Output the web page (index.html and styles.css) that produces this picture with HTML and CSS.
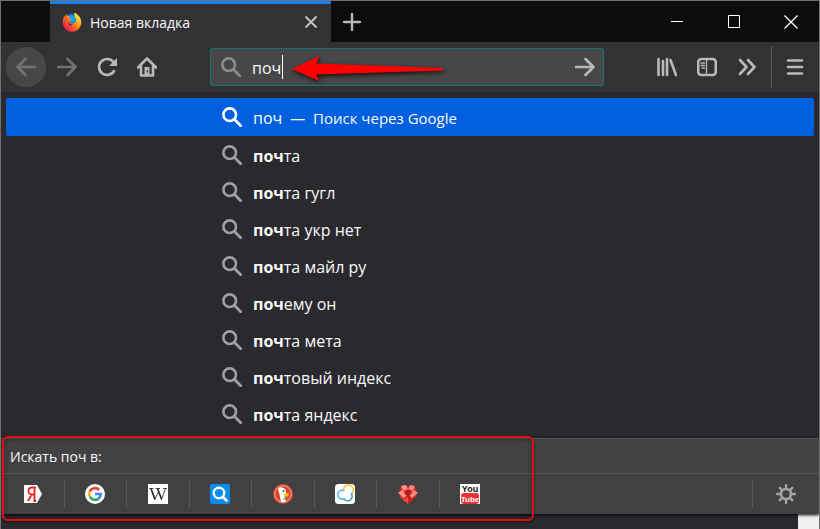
FILE: index.html
```html
<!DOCTYPE html>
<html lang="ru">
<head>
<meta charset="utf-8">
<title>Новая вкладка</title>
<link rel="stylesheet" href="styles.css">
</head>
<body>
<svg class="defs" aria-hidden="true">
  <symbol id="search" viewBox="0 0 20 20"><circle cx="7.7" cy="7.7" r="6.3" fill="none" stroke="currentColor" stroke-width="2.6"/><path d="M12.3 12.3 18.7 18.7" stroke="currentColor" stroke-width="2.8" stroke-linecap="round"/></symbol>
</svg>
<div class="window">
  <header class="tabbar">
    <div class="tab">
      <svg class="tab-icon" viewBox="0 0 20 20">
        <defs>
          <linearGradient id="fox" x1="0.9" y1="0.1" x2="0.15" y2="0.85"><stop offset="0" stop-color="#fff14a"/><stop offset=".35" stop-color="#ffb01f"/><stop offset=".65" stop-color="#ff5a22"/><stop offset="1" stop-color="#f0204e"/></linearGradient>
        </defs>
        <circle cx="10" cy="8.5" r="7" fill="#1769d2"/>
        <path d="M6 4Q10 2 13 5L13 10 6 10Z" fill="#18a4f0"/>
        <path d="M12.5.5Q19.3 4 19.2 11A9.2 8.8 0 0 1 .8 11Q.5 6 2.6 3.2L3.4 5.2 4.2 2.2 6 4.6Q7.2 4.2 8.2 4.8L7.4 6.8 9.6 7.5 7.6 9Q7.4 11 9.8 11.2 12.5 11.4 13.6 9.5 14.8 7.5 13 5.4 11.6 3 12.5.5Z" fill="url(#fox)"/>
        <path d="M6 9.5Q7.5 13 11 12.7L9 14Q6 13 6 9.5Z" fill="#2b2a88"/>
      </svg>
      <span class="tab-title">Новая вкладка</span>
      <button class="bare" aria-label="Закрыть вкладку"><svg width="12" height="12" viewBox="0 0 12 12"><path d="M1 1 11 11M11 1 1 11" stroke="#c4c4c5" stroke-width="1.8" stroke-linecap="round"/></svg></button>
    </div>
    <button class="bare new-tab" aria-label="Открыть новую вкладку"><svg width="18" height="18" viewBox="0 0 18 18"><path d="M9 1V17M1 9H17" stroke="#b9b9ba" stroke-width="2.4" stroke-linecap="round"/></svg></button>
    <div class="win-controls">
      <button class="bare" aria-label="Свернуть"><svg width="12" height="14" viewBox="0 0 12 14"><path d="M0 6.5H12" stroke="#fff"/></svg></button>
      <button class="bare" aria-label="Развернуть"><svg width="12" height="13" viewBox="0 0 12 13"><path d="M.5.5H11.500V12.500H.5Z" fill="none" stroke="#fff"/></svg></button>
      <button class="bare" aria-label="Закрыть"><svg width="14" height="14" viewBox="0 0 14 14"><path d="M.5.5 13.500 13.500M13.500.5.5 13.500" stroke="#fff" stroke-width="1.3"/></svg></button>
    </div>
  </header>

  <nav class="toolbar">
    <button class="tool back" aria-label="Назад"><svg width="20" height="20" viewBox="0 0 20 20"><path d="M19 10H2M9.500 2 1.500 10 9.500 18"/></svg></button>
    <button class="tool forward" aria-label="Вперёд"><svg width="20" height="20" viewBox="0 0 20 20"><path d="M1 10H18M10.500 2 18.500 10 10.500 18"/></svg></button>
    <button class="tool" aria-label="Обновить"><svg width="20" height="20" viewBox="0 0 20 20"><path d="M17 14A8 8 0 1 1 16.500 5.200"/><path class="solid" d="M20 1V9H12Z"/></svg></button>
    <button class="tool" aria-label="Домой"><svg width="20" height="20" viewBox="0 0 20 20"><path d="M1 10.500 10 1.500 19 10.500M4 9.500V18.500H16V9.500"/><path class="solid" d="M7.500 10H12.500V18H7.500Z"/><path class="knob" d="M10.500 13.500V15"/></svg></button>
    <form class="urlbar">
      <svg class="icon"><use href="#search"/></svg>
      <div class="field">
        <input type="text" value="поч" aria-label="Поиск или адрес">
        <span class="caret"></span>
      </div>
      <button type="button" class="bare" aria-label="Перейти"><svg class="go" width="20" height="20" viewBox="0 0 20 20"><path d="M1 10H18M10.500 2 18.500 10 10.500 18"/></svg></button>
      <svg class="arrow" viewBox="0 0 154 26" aria-hidden="true"><path d="M0 13 27 0 24.500 7.500 150 12Q154 13 150 14.500L24.500 18.500 27 25Z" fill="#f00"/></svg>
    </form>
    <button class="tool" aria-label="Библиотека"><svg width="20" height="20" viewBox="0 0 20 20"><path d="M1.500 2V18M6 4V18M10 2V18M13.500 3 19 18"/></svg></button>
    <button class="tool" aria-label="Боковая панель"><svg width="20" height="20" viewBox="0 0 20 20"><rect x="1.200" y="2" width="17.600" height="16" rx="3"/><path class="fine" d="M9.500 2V18M4 6H7.500M4 8.500H7.500M5 11H7.500"/></svg></button>
    <button class="tool" aria-label="Другие инструменты"><svg width="20" height="20" viewBox="0 0 20 20"><path d="M3 3 9.500 10 3 17M11 3 17.500 10 11 17"/></svg></button>
    <span class="divider"></span>
    <button class="tool" aria-label="Меню"><svg width="20" height="20" viewBox="0 0 20 20"><path d="M3 3.500H17M3 10H17M3 16.500H17"/></svg></button>
  </nav>

  <main class="popup">
    <ul class="results">
      <li class="selected"><svg class="icon"><use href="#search"/></svg><span>поч</span><span class="action">—&nbsp; Поиск через Google</span></li>
      <li><svg class="icon"><use href="#search"/></svg><span><b>поч</b>та</span></li>
      <li><svg class="icon"><use href="#search"/></svg><span><b>поч</b>та гугл</span></li>
      <li><svg class="icon"><use href="#search"/></svg><span><b>поч</b>та укр нет</span></li>
      <li><svg class="icon"><use href="#search"/></svg><span><b>поч</b>та майл ру</span></li>
      <li><svg class="icon"><use href="#search"/></svg><span><b>поч</b>ему он</span></li>
      <li><svg class="icon"><use href="#search"/></svg><span><b>поч</b>та мета</span></li>
      <li><svg class="icon"><use href="#search"/></svg><span><b>поч</b>товый индекс</span></li>
      <li><svg class="icon"><use href="#search"/></svg><span><b>поч</b>та яндекс</span></li>
    </ul>
    <section class="oneoffs">
      <div class="oneoffs-title">Искать поч в:</div>
      <div class="oneoffs-row">
        <div class="engines">
          <button class="bare" aria-label="Яндекс"><svg width="20" height="20" viewBox="0 0 20 20"><path d="M1 1H14L19 10 14 19H1Z" fill="#fff"/><path d="M11.500 17V3.500H9Q5.500 3.500 5.500 7T9 10.500H11.500M8.700 10.500 5 17M10 3.500H13M10.500 17H13" fill="none" stroke="#e52620" stroke-width="1.800"/></svg></button>
          <button class="bare" aria-label="Google"><svg width="20" height="20" viewBox="0 0 20 20"><circle cx="10" cy="10" r="10" fill="#fff"/><g fill="none" stroke-width="2.600"><path d="M14.200 6A5.800 5.800 0 0 0 4.800 7.300" stroke="#ea4335"/><path d="M4.800 7.300A5.800 5.800 0 0 0 4.800 12.700" stroke="#fbbc05"/><path d="M4.800 12.700A5.800 5.800 0 0 0 13.500 14.600" stroke="#34a853"/><path d="M10 10H15.800A5.800 5.800 0 0 1 13.500 14.600" stroke="#4285f4"/></g></svg></button>
          <button class="bare" aria-label="Википедия"><svg width="20" height="20" viewBox="0 0 20 20"><path d="M0 0H20V20H0Z" fill="#fff"/><path d="M1 4.500H5.500M7.500 4.500H12M15 4.500H19M13.500 15.500 17.500 4.500M6.700 15.500 10.500 8" fill="none" stroke="#222" stroke-width=".8"/><path d="M3 4.500 7 15.500M9.500 4.500 13.700 15.500" stroke="#222" stroke-width="1.600"/></svg></button>
          <button class="bare" aria-label="Поиск"><svg width="20" height="20" viewBox="0 0 20 20"><rect width="20" height="20" rx="2" fill="#078bee"/><circle cx="9" cy="9" r="5.300" fill="none" stroke="#fff" stroke-width="2.400"/><path d="M13 13 16.500 16.500" stroke="#fff" stroke-width="2.600" stroke-linecap="round"/></svg></button>
          <button class="bare" aria-label="DuckDuckGo"><svg width="20" height="20" viewBox="0 0 20 20"><circle cx="10" cy="10" r="10" fill="#d9482b"/><circle cx="10" cy="10" r="8.300" fill="none" stroke="#f2b5a5" stroke-width=".9"/><path d="M5 5Q6 2.500 9 3.500 13.500 4.500 13 9L11.500 12 13 17.700Q10 18.500 8 17.700L6.500 10Z" fill="#fff"/><path d="M11 10Q14 8.500 16.500 10L14.500 11 16 12Q12.500 13.300 11 12Z" fill="#fdc41b"/><circle cx="10.500" cy="7" r="1" fill="#24456f"/><path d="M9.500 14.500 13.500 14 13.500 17Z" fill="#59ad42"/></svg></button>
          <button class="bare" aria-label="Облако"><svg width="20" height="20" viewBox="0 0 20 20"><rect width="20" height="20" rx="3.500" fill="#fff"/><g fill="none" stroke-width="1.500" stroke-linecap="round"><path d="M9 6.500A4.500 4.500 0 1 0 8.500 15" stroke="#55b6ed"/><path d="M8.500 5.500A5 5 0 1 1 16.500 10" stroke="#f7c52d"/><path d="M16.500 10A4.200 4.200 0 1 1 9 14.800" stroke="#438fd8"/></g></svg></button>
          <button class="bare" aria-label="Подарки"><svg width="20" height="20" viewBox="0 0 20 20"><path d="M1 6 5 1 10 3 15 1 19 6 18 13 10 20 2 13Z" fill="#c9251d"/><path d="M0 9 4 6 9 11 6 14ZM3 2 8 1 10 5 5 7Z" fill="#f79189"/><path d="M20 9 16 6 11 11 14 14ZM17 2 12 1 10 5 15 7Z" fill="#ee8880"/><path d="M10 6 14 9 10 13 6 9Z" fill="#b51b16"/><path d="M10 13V20L2 13 3 12 6 15Z" fill="#f04a3c"/></svg></button>
          <button class="bare" aria-label="YouTube"><svg width="20" height="20" viewBox="0 0 20 20"><path d="M0 0H20V20H0Z" fill="#fff"/><rect x="1" y="9" width="18" height="11" rx="3" fill="#ee3038"/><text class="yt" x="10" y="8">You</text><text class="yt yt-light" x="10" y="18">Tube</text></svg></button>
        </div>
        <button class="bare settings" aria-label="Настройки поиска"><svg width="20" height="20" viewBox="0 0 20 20"><circle cx="10" cy="10" r="5" fill="none" stroke="#a3a3a4" stroke-width="2.600"/><path d="M10 1V4M10 16V19M1 10H4M16 10H19M3.800 3.800 5.800 5.800M14.200 14.200 16.200 16.200M16.200 3.800 14.200 5.800M5.800 14.200 3.800 16.200" stroke="#a3a3a4" stroke-width="2.400" stroke-linecap="round"/></svg></button>
      </div>
      <div class="highlight"></div>
    </section>
  </main>
  <footer class="page-edge"><span></span></footer>
</div>
</body>
</html>
```
FILE: styles.css
```css
* {
  box-sizing: border-box;
}

body {
  margin: 0;
  background: #2a2a2e;
  color: #f9f9fa;
  font-family: "Open Sans", "Noto Sans", sans-serif;
  font-size: 16px;
}

.defs {
  position: absolute;
  width: 0;
  height: 0;
}

.window {
  display: flex;
  flex-direction: column;
  min-height: 100vh;
  border: 1px solid #707072;
  border-bottom: 0;
  overflow: hidden;
}

.bare,
.tool {
  display: flex;
  align-items: center;
  justify-content: center;
  padding: 0;
  border: 0;
  background: none;
  color: inherit;
}

.tabbar {
  display: flex;
  height: 41px;
  background: #0c0c0d;
}

.tab {
  display: flex;
  align-items: center;
  width: 281px;
  margin-left: 49px;
  padding: 0 14px 2px 12px;
  border-top: 3px solid #1683f5;
  background: #323234;
}

.tab-icon {
  width: 20px;
  height: 20px;
}

.tab-title {
  flex: 1;
  padding-left: 8px;
  font-size: 14px;
}

.new-tab {
  width: 42px;
}

.win-controls {
  display: flex;
  margin-left: auto;
}

.win-controls .bare {
  width: 57px;
}

.toolbar {
  display: flex;
  align-items: center;
  height: 50px;
  padding: 0 4px 0 5px;
  background: #323234;
}

.tool {
  width: 40px;
  height: 40px;
  flex: none;
}

.tool svg,
.go {
  fill: none;
  stroke: #b9b9ba;
  stroke-width: 2.6px;
  stroke-linecap: round;
  stroke-linejoin: round;
}

.tool .solid {
  fill: #b9b9ba;
  stroke: none;
}

.tool .knob {
  stroke: #323234;
  stroke-width: 1.2px;
}

.tool .fine {
  stroke-width: 1.3px;
}

.back {
  border-radius: 50%;
  background: #474749;
}

.back + .forward {
  margin-left: 1px;
}

.back svg,
.forward svg {
  stroke: #727274;
}

.urlbar {
  position: relative;
  display: flex;
  align-items: center;
  flex: 1;
  height: 38px;
  margin: 0 43px;
  padding: 0 8px 0 10px;
  border: 1px solid #10756d;
  border-radius: 2px;
  background: #474749;
}

.icon {
  width: 20px;
  height: 20px;
  flex: none;
  color: #a0a0a2;
}

.urlbar .icon {
  color: #8c8c8d;
}

.field {
  position: relative;
  flex: 1;
  min-width: 0;
  margin-left: 11px;
}

.field input {
  width: 100%;
  padding: 2px 0 0;
  border: 0;
  outline: 0;
  background: none;
  color: #f9f9fa;
  font: inherit;
}

.caret {
  position: absolute;
  top: 0;
  left: 30px;
  width: 1px;
  height: 24px;
  background: #fff;
}

.arrow {
  position: absolute;
  top: 7px;
  left: 81px;
  width: 154px;
  height: 26px;
  overflow: visible;
  filter: drop-shadow(1px 2px 2px #111);
}

.divider {
  width: 1px;
  height: 42px;
  margin: 0 3px 0 4px;
  background: #5c5c5e;
}

.popup {
  border-top: 1px solid #242427;
  background: #2a2a2e;
}

.results {
  margin: 0;
  padding: 5px 5px 6px;
  list-style: none;
}

.results li {
  display: flex;
  align-items: center;
  height: 37px;
  padding-left: 216px;
  border-radius: 2px;
}

.results li span {
  margin-left: 11px;
  padding-top: 2px;
}

.results b {
  font-weight: 700;
}

.results .selected {
  height: 38px;
  background: #0060df;
}

.selected .icon {
  color: #fff;
}

.results .selected .action {
  margin-left: 8px;
  font-size: 15px;
}

.oneoffs {
  position: relative;
  border-top: 1px solid #58585a;
  background: #414143;
  box-shadow: 0 1px 3px #000;
}

.oneoffs-title {
  height: 34px;
  padding-left: 9px;
  font-size: 14px;
  line-height: 36px;
}

.oneoffs-row {
  display: flex;
  align-items: center;
  justify-content: space-between;
  height: 41px;
  padding-right: 1px;
  border-top: 1px solid #58585a;
}

.engines {
  display: flex;
  width: 501px;
  padding-left: 1px;
}

.engines .bare {
  flex: 1;
  height: 28px;
  border-right: 1px solid #59595b;
}

.engines .bare:last-child {
  border-color: transparent;
}

.yt {
  font: bold 9px "Liberation Sans", sans-serif;
  text-anchor: middle;
  fill: #111;
}

.yt-light {
  font-size: 8px;
  fill: #fff;
}

.settings {
  width: 66px;
  height: 28px;
  border-left: 1px solid #59595b;
}

.highlight {
  position: absolute;
  top: -3px;
  bottom: -7px;
  left: 1px;
  width: 65%;
  border: 2px solid #e01015;
  border-radius: 6px;
  box-shadow: 0 1px 3px #0008, inset 0 1px 4px #0006;
  pointer-events: none;
}

.page-edge {
  display: flex;
  justify-content: flex-end;
  flex: 1;
}

.page-edge span {
  width: 21px;
  background: #f0f0f0;
}
```
